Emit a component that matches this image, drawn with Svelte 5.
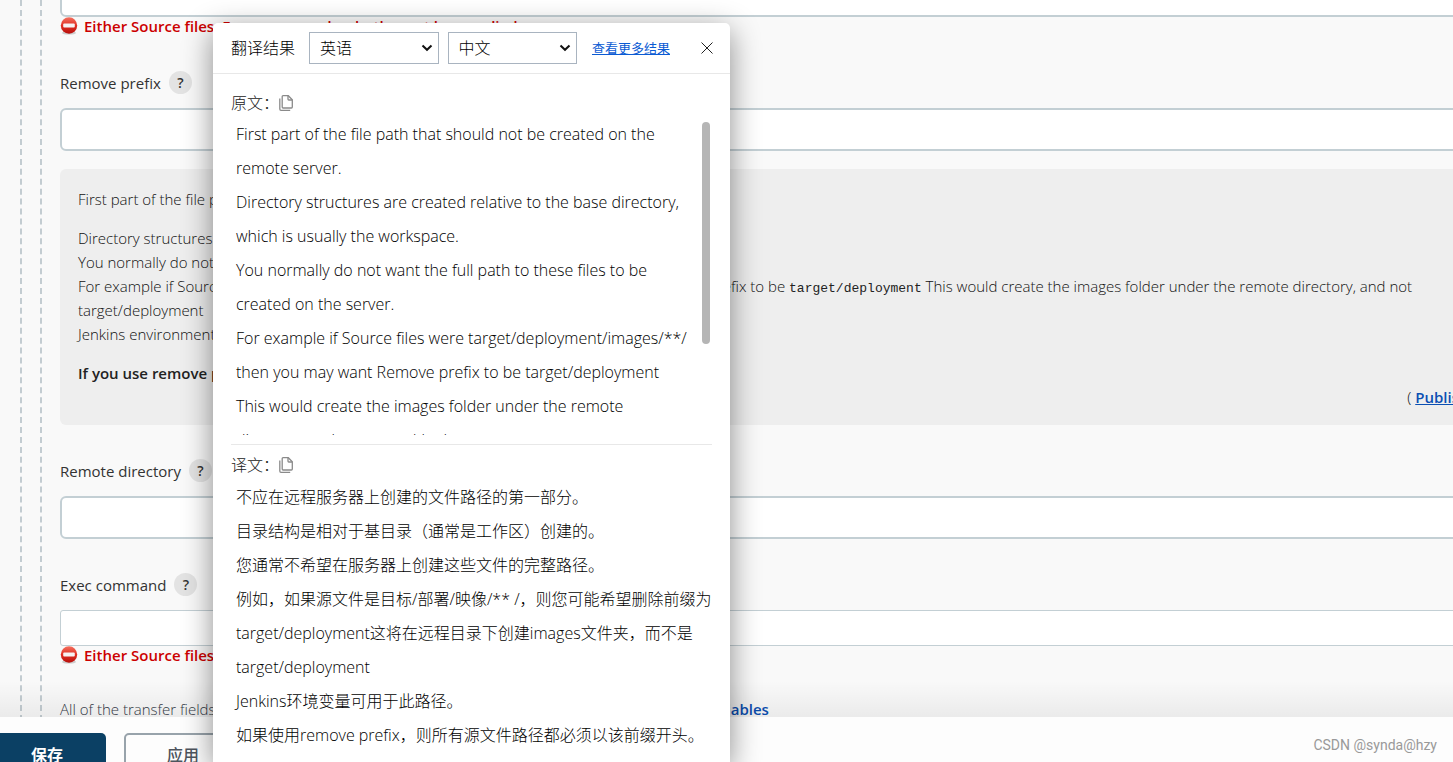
<script>
  let sourceLang = $state('英语')
  let targetLang = $state('中文')

  const original = [
    'First part of the file path that should not be created on the',
    'remote server.',
    'Directory structures are created relative to the base directory,',
    'which is usually the workspace.',
    'You normally do not want the full path to these files to be',
    'created on the server.',
    'For example if Source files were target/deployment/images/**/',
    'then you may want Remove prefix to be target/deployment',
    'This would create the images folder under the remote',
    'directory, and not target/deployment',
  ]

  const translated = [
    '不应在远程服务器上创建的文件路径的第一部分。',
    '目录结构是相对于基目录（通常是工作区）创建的。',
    '您通常不希望在服务器上创建这些文件的完整路径。',
    '例如，如果源文件是目标/部署/映像/** /，则您可能希望删除前缀为',
    'target/deployment这将在远程目录下创建images文件夹，而不是',
    'target/deployment',
    'Jenkins环境变量可用于此路径。',
    '如果使用remove prefix，则所有源文件路径都必须以该前缀开头。',
  ]
</script>

{#snippet error()}
  <div class="error">
    <svg width="18" height="18" viewBox="0 0 18 18" aria-hidden="true">
      <defs>
        <linearGradient id="stop" x1="0" y1="0" x2="0" y2="1">
          <stop offset="0" stop-color="#f4705f" />
          <stop offset="0.5" stop-color="#e02f22" />
          <stop offset="1" stop-color="#b80f0c" />
        </linearGradient>
      </defs>
      <ellipse cx="9" cy="16" rx="7" ry="1.6" fill="#000" opacity="0.18" />
      <circle cx="9" cy="8.5" r="8.2" fill="url(#stop)" />
      <rect x="3.2" y="6.6" width="11.6" height="4" rx="1" fill="#f6f2f2" />
    </svg>
    <span>Either Source files, Exec command or both must be supplied</span>
  </div>
{/snippet}

{#snippet copyIcon()}
  <svg width="14" height="16" viewBox="0 0 14 16" fill="none" stroke="#8a8a8a" stroke-width="1.3">
    <path d="M3.2 1.6q0-.9.9-.9h5.2l4 4v7.4q0 .9-.9.9H4.100q-.9 0-.9-.9z" />
    <path d="M9 .8v3.400q0 .8.8.8h3.400" />
    <path d="M.8 3.400v10.700q0 1.200 1.200 1.200h9.200" />
  </svg>
{/snippet}

{#snippet arrow()}
  <svg class="arrow" width="12" height="8" viewBox="0 0 12 8" fill="none" stroke="#111" stroke-width="2">
    <path d="M1.500 1.500 6 5.800l4.500-4.300" />
  </svg>
{/snippet}

<div class="page">
  <main>
    <div class="outer">
      <div class="inner">
        <input class="field" aria-label="Source files" />
        {@render error()}

        <div class="label first">
          <label for="prefix">Remove prefix</label>
          <button class="help">?</button>
        </div>
        <input class="field" id="prefix" />

        <div class="note">
          <p>First part of the file path that should not be created on the remote server.</p>
          <p>
            Directory structures are created relative to the base directory, which is usually the workspace.<br />
            You normally do not want the full path to these files to be created on the server.<br />
            For example if Source files were <code>target/deployment/images/**/</code> then you may want Remove prefix to be <code>target/deployment</code> This would create the images folder under the remote directory, and not<br />
            target/deployment<br />
            Jenkins environment variables can be used in this path.
          </p>
          <p><b>If you use remove prefix, then ALL source file paths MUST start with the prefix.</b></p>
          <div class="from">( <a href="#plugin">Publish Over SSH</a> )</div>
        </div>

        <div class="label">
          <label for="remote">Remote directory</label>
          <button class="help">?</button>
        </div>
        <input class="field" id="remote" />

        <div class="label">
          <label for="exec">Exec command</label>
          <button class="help">?</button>
        </div>
        <textarea id="exec"></textarea>
        {@render error()}

        <div class="hint">
          All of the transfer fields (except for Exec timeout) support substitution of <a href="#env">Jenkins environment variables</a>
        </div>
      </div>
    </div>
  </main>

  <footer>
    <button class="save">保存</button>
    <button class="apply">应用</button>
    <span class="mark">CSDN @synda@hzy</span>
  </footer>

  <section class="popup">
    <header>
      <span class="title">翻译结果</span>
      <div class="select">
        <select bind:value={sourceLang} aria-label="源语言">
          <option>英语</option>
          <option>中文</option>
        </select>
        {@render arrow()}
      </div>
      <div class="select">
        <select bind:value={targetLang} aria-label="目标语言">
          <option>中文</option>
          <option>英语</option>
        </select>
        {@render arrow()}
      </div>
      <a class="more" href="#more">查看更多结果</a>
      <button class="close" aria-label="关闭">
        <svg width="12" height="12" viewBox="0 0 12 12" stroke="#222" stroke-width="1">
          <path d="M.5.5l11 11M11.500.5l-11 11" />
        </svg>
      </button>
    </header>

    <div class="part source">
      <div class="caption">原文：<button class="copy" aria-label="复制原文">{@render copyIcon()}</button></div>
      <div class="text clipped">
        {#each original as line}
          <div>{line}</div>
        {/each}
        <span class="thumb"></span>
      </div>
    </div>
    <div class="part result">
      <div class="caption">译文：<button class="copy" aria-label="复制译文">{@render copyIcon()}</button></div>
      <div class="text">
        {#each translated as line}
          <div>{line}</div>
        {/each}
      </div>
    </div>
  </section>
</div>

<style>
  :global(body) {
    margin: 0;
  }

  .page {
    position: relative;
    display: flex;
    flex-direction: column;
    height: 100vh;
    overflow: hidden;
    background: #f9f9f9;
    color: #333;
    font-family: 'Open Sans', 'Noto Sans CJK SC', sans-serif;
    font-size: 15px;
    line-height: 24px;
    white-space: nowrap;
  }

  .page * {
    box-sizing: border-box;
  }

  button,
  input,
  select,
  textarea {
    margin: 0;
    font: inherit;
    color: inherit;
  }

  button {
    padding: 0;
    border: 0;
    background: none;
  }

  main {
    position: relative;
    flex: 1;
    min-height: 0;
    overflow: hidden;
    padding-left: 20px;
  }

  /* shade above the sticky button bar */
  main::after {
    content: '';
    position: absolute;
    left: 0;
    right: 0;
    bottom: 0;
    height: 36px;
    background: linear-gradient(rgba(0, 0, 0, 0), rgba(0, 0, 0, 0.06));
  }

  .outer,
  .inner {
    border-left: 2px dashed #c3ccd1;
    padding-left: 18px;
  }

  .inner {
    display: flex;
    flex-direction: column;
    margin-right: -112px;
  }

  .field {
    flex: none;
    width: 100%;
    height: 43px;
    padding: 0 10px;
    border: 2px solid #c3cfd4;
    border-radius: 6px;
    background: #fff;
  }

  .field:first-child {
    margin-top: -26px;
  }

  .error {
    display: flex;
    align-items: center;
    gap: 6px;
    height: 18px;
    color: #c00;
    font-weight: 600;
  }

  .label {
    display: flex;
    align-items: center;
    gap: 8px;
    height: 23px;
    margin: 34px 0 14px;
  }

  .label.first {
    margin-top: 36px;
  }

  .help {
    width: 23px;
    height: 23px;
    border-radius: 50%;
    background: #e3e3e3;
    font-size: 14px;
    font-weight: 600;
    line-height: 23px;
  }

  .note {
    height: 256px;
    margin-top: 18px;
    padding: 18px;
    border-radius: 6px;
    background: #eee;
    color: #111;
    font-weight: 300;
  }

  .note p {
    margin: 0 0 15px;
  }

  .note b {
    color: #222;
    font-weight: 600;
  }

  code {
    color: #222;
    font-family: 'Liberation Mono', monospace;
    font-size: 13px;
    font-weight: 400;
    line-height: 1;
  }

  .from {
    text-align: right;
    margin-top: -15px;
  }

  a {
    color: #0b4fb3;
    font-weight: 600;
  }

  textarea {
    flex: none;
    width: 100%;
    height: 36px;
    border: 1px solid #c3cfd4;
    border-radius: 3px;
    background: #fff;
    resize: none;
  }

  .hint {
    margin-top: 33px;
    color: #333a47;
    font-weight: 300;
  }

  .hint a {
    font-weight: 600;
    text-decoration: none;
  }

  footer {
    flex: none;
    display: flex;
    gap: 18px;
    height: 45px;
    padding: 16px 16px 0 0;
    background: #fdfdfd;
  }

  .save,
  .apply {
    width: 118px;
    height: 44px;
    border-radius: 5px;
    font-size: 16px;
    font-weight: 700;
  }

  .save {
    margin-left: -12px;
    background: #0b4064;
    color: #fff;
  }

  .apply {
    border: 2px solid #98a3ab;
    color: #4d545d;
    font-weight: 500;
  }

  .mark {
    margin-left: auto;
    color: #999;
    font-family: Roboto, sans-serif;
    font-size: 14px;
  }

  .popup {
    position: absolute;
    top: 23px;
    left: 213px;
    bottom: 0;
    width: 517px;
    border-radius: 5px 5px 0 0;
    background: #fff;
    box-shadow: 0 8px 30px rgba(0, 0, 0, 0.45);
    color: #000;
    font-size: 16px;
    font-weight: 300;
  }

  header {
    display: flex;
    align-items: center;
    height: 51px;
    padding: 0 17px 0 18px;
    border-bottom: 1px solid #e8e8e8;
  }

  .title {
    margin-right: 14px;
  }

  .select {
    position: relative;
    flex: 1;
    margin-right: 9px;
  }

  select {
    display: block;
    appearance: none;
    width: 100%;
    height: 32px;
    padding: 0 10px;
    border: 1px solid #a9b4c0;
    border-radius: 0;
    background: #fff;
  }

  .arrow {
    position: absolute;
    right: 6px;
    top: 12px;
    pointer-events: none;
  }

  .more {
    margin: 0 31px 0 6px;
    color: #0b5bd3;
    font-size: 13px;
    font-weight: 400;
  }

  .close {
    display: flex;
  }

  .part {
    margin: 0 18px;
  }

  .source {
    padding-top: 16px;
    border-bottom: 1px solid #e8e8e8;
  }

  .result {
    padding-top: 7px;
  }

  .caption {
    display: flex;
    align-items: center;
    height: 26px;
    color: #222;
  }

  .copy {
    display: flex;
  }

  .text {
    padding: 2px 0 0 5px;
    line-height: 34px;
  }

  .clipped {
    position: relative;
    height: 319px;
    margin-bottom: 9px;
    padding-top: 1px;
    overflow: hidden;
  }

  .thumb {
    position: absolute;
    top: 6px;
    right: 2px;
    width: 8px;
    height: 222px;
    border-radius: 4px;
    background: #b5b5b5;
  }
</style>
